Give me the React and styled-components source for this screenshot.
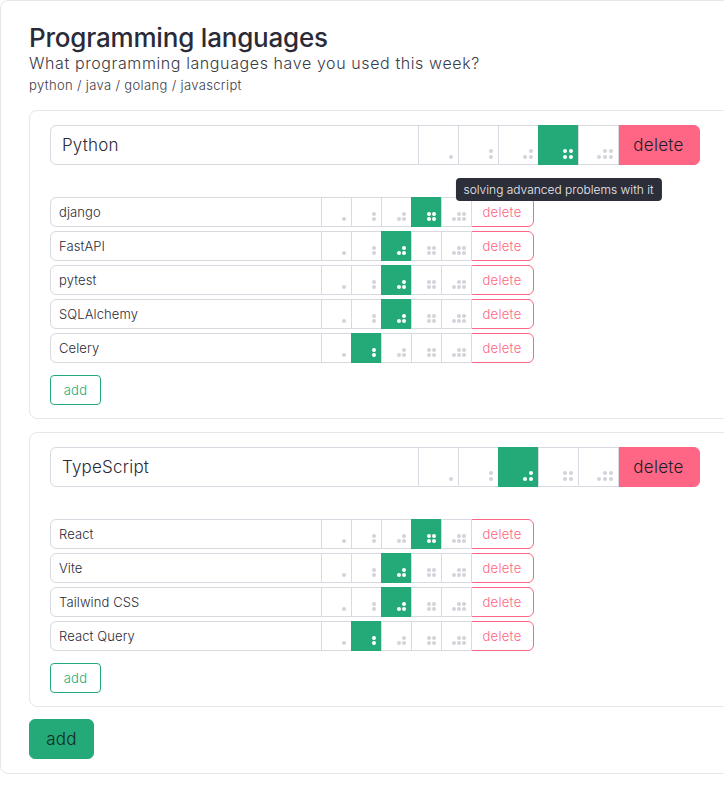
import React from 'react';
import styled, { createGlobalStyle } from 'styled-components';

const GREEN = '#23aa78';
const RED = '#ff6584';
const LINE = '#d9d9e1';
const TEXT = '#2b2b38';

const GlobalStyle = createGlobalStyle`
  body {
    margin: 0;
    background: #ffffff;
    font-family: 'Inter', 'Lato', sans-serif;
    color: ${TEXT};
    overflow: hidden;
  }
`;

const Page = styled.div`
  width: 800px;
  box-sizing: border-box;
  border: 1px solid #e6e6ec;
  border-radius: 8px;
  padding: 22px 28px 14px 28px;
`;

const Title = styled.h1`
  margin: 0;
  font-size: 26px;
  line-height: 30px;
  font-weight: 500;
  letter-spacing: -0.2px;
`;

const Subtitle = styled.div`
  font-size: 16px;
  line-height: 20px;
  font-weight: 300;
  letter-spacing: 0.6px;
  color: #3a3a48;
`;

const Hint = styled.div`
  margin-top: 4px;
  font-size: 13px;
  line-height: 16px;
  font-weight: 300;
  letter-spacing: 0.35px;
  color: #3a3a48;
`;

const Card = styled.div`
  margin-top: ${({ first }) => (first ? '17px' : '13px')};
  border: 1px solid #e6e6ec;
  border-radius: 8px;
  padding: 14px 20px 13px 20px;
`;

const Row = styled.div`
  display: flex;
  height: ${({ big }) => (big ? 40 : 30)}px;
  margin-top: ${({ gap }) => gap || 0}px;
  position: relative;
`;

const NameInput = styled.input`
  box-sizing: border-box;
  margin: 0;
  width: ${({ big }) => (big ? 369 : 272)}px;
  height: 100%;
  border: 1px solid ${LINE};
  border-radius: 6px 0 0 6px;
  padding: 0 ${({ big }) => (big ? 11 : 8)}px;
  font-family: inherit;
  font-size: ${({ big }) => (big ? 17 : 13)}px;
  font-weight: 300;
  letter-spacing: ${({ big }) => (big ? 0.2 : 0.1)}px;
  color: ${TEXT};
  background: #fff;
  outline: none;
`;

const Cell = styled.button`
  position: relative;
  box-sizing: border-box;
  width: ${({ big }) => (big ? 41 : 31)}px;
  height: 100%;
  margin: 0 0 0 -1px;
  padding: 0;
  border: 1px solid ${({ active }) => (active ? GREEN : LINE)};
  background: ${({ active }) => (active ? GREEN : '#fff')};
  cursor: pointer;
`;

const Dots = styled.span`
  position: absolute;
  right: 5px;
  bottom: 5px;
  display: grid;
  grid-template-columns: repeat(3, 4px);
  grid-template-rows: repeat(2, 4px);
  gap: ${({ big }) => (big ? 2 : 1)}px;
`;

const Dot = styled.span`
  width: 4px;
  height: 4px;
  border-radius: 50%;
  background: ${({ on, active }) => (!on ? 'transparent' : active ? '#ffffff' : '#d3d3db')};
`;

const DeleteButton = styled.button`
  box-sizing: border-box;
  width: ${({ big }) => (big ? 83 : 64)}px;
  height: 100%;
  margin: 0 0 0 -2px;
  border: 1px solid ${RED};
  border-radius: 0 6px 6px 0;
  background: ${({ big }) => (big ? RED : '#fff')};
  color: ${({ big }) => (big ? '#1e1e28' : RED)};
  font-family: inherit;
  font-size: ${({ big }) => (big ? 17 : 13)}px;
  font-weight: 300;
  letter-spacing: 0.3px;
  cursor: pointer;
`;

const AddButton = styled.button`
  box-sizing: border-box;
  display: block;
  margin-top: 12px;
  width: ${({ big }) => (big ? 65 : 51)}px;
  height: ${({ big }) => (big ? 40 : 30)}px;
  border: 1px solid ${GREEN};
  border-radius: ${({ big }) => (big ? 6 : 4)}px;
  background: ${({ big }) => (big ? GREEN : '#fff')};
  color: ${({ big }) => (big ? '#102a20' : GREEN)};
  font-family: inherit;
  font-size: ${({ big }) => (big ? 17 : 13)}px;
  font-weight: 300;
  letter-spacing: 0.3px;
  cursor: pointer;
`;

const Tooltip = styled.div`
  position: absolute;
  top: 52px;
  left: 50%;
  transform: translateX(-50%);
  white-space: nowrap;
  background: #2c2f3a;
  color: #ececf0;
  font-family: 'Inter', sans-serif;
  font-size: 12px;
  font-weight: 300;
  letter-spacing: 0;
  line-height: 13px;
  padding: 5px 8px;
  border-radius: 4px;
  z-index: 2;
`;

// which of the 3x2 dots are lit for each level (row-major, top row first)
const PATTERNS = {
  1: [0, 0, 0, 0, 0, 1],
  2: [0, 0, 1, 0, 0, 1],
  3: [0, 0, 1, 0, 1, 1],
  4: [0, 1, 1, 0, 1, 1],
  5: [0, 1, 1, 1, 1, 1],
};

const LevelCell = ({ level, active, big, tip }) => (
  <Cell big={big} active={active}>
    <Dots big={big}>
      {PATTERNS[level].map((on, i) => (
        <Dot key={i} on={on} active={active} />
      ))}
    </Dots>
    {tip && <Tooltip>{tip}</Tooltip>}
  </Cell>
);

const SkillRow = ({ name, level, big, gap, tip }) => (
  <Row big={big} gap={gap}>
    <NameInput big={big} defaultValue={name} />
    {[1, 2, 3, 4, 5].map((l) => (
      <LevelCell
        key={l}
        level={l}
        big={big}
        active={l === level}
        tip={tip && l === level ? tip : null}
      />
    ))}
    <DeleteButton big={big}>delete</DeleteButton>
  </Row>
);

const languages = [
  {
    name: 'Python',
    level: 4,
    tip: 'solving advanced problems with it',
    libs: [
      { name: 'django', level: 4 },
      { name: 'FastAPI', level: 3 },
      { name: 'pytest', level: 3 },
      { name: 'SQLAlchemy', level: 3 },
      { name: 'Celery', level: 2 },
    ],
  },
  {
    name: 'TypeScript',
    level: 3,
    libs: [
      { name: 'React', level: 4 },
      { name: 'Vite', level: 3 },
      { name: 'Tailwind CSS', level: 3 },
      { name: 'React Query', level: 2 },
    ],
  },
];

const App = () => (
  <>
    <GlobalStyle />
    <Page>
      <Title>Programming languages</Title>
      <Subtitle>What programming languages have you used this week?</Subtitle>
      <Hint>python / java / golang / javascript</Hint>
      {languages.map((lang, idx) => (
        <Card key={lang.name} first={idx === 0}>
          <SkillRow name={lang.name} level={lang.level} big tip={lang.tip} />
          {lang.libs.map((lib, i) => (
            <SkillRow key={lib.name} name={lib.name} level={lib.level} gap={i === 0 ? 32 : 4} />
          ))}
          <AddButton>add</AddButton>
        </Card>
      ))}
      <AddButton big>add</AddButton>
    </Page>
  </>
);

export default App;
